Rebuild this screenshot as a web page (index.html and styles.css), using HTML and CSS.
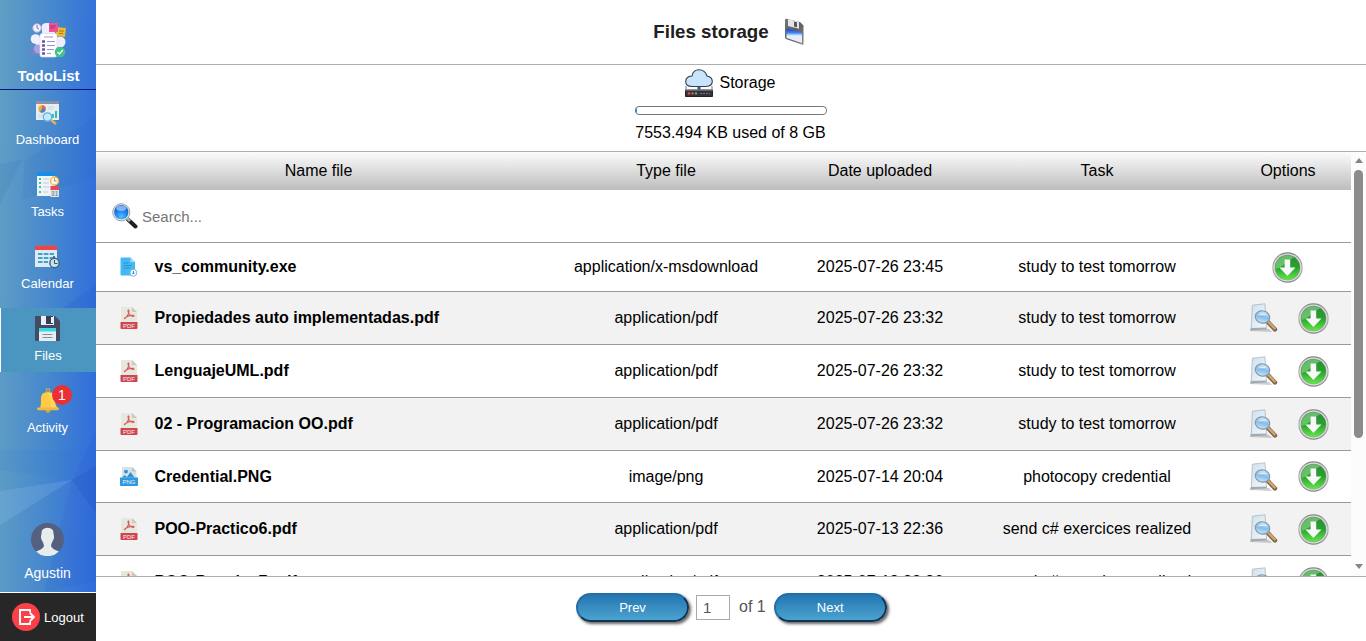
FILE: index.html
```html
<!DOCTYPE html>
<html lang="en">
<head>
<meta charset="utf-8">
<title>Files storage</title>
<link rel="stylesheet" href="styles.css">
</head>
<body>
<svg class="defs" aria-hidden="true">
  <defs>
    <linearGradient id="gGreen" x1="0" y1="0" x2="0" y2="1"><stop offset="0" stop-color="#2c8d3a"/><stop offset=".5" stop-color="#27a32c"/><stop offset="1" stop-color="#62e64a"/></linearGradient>
    <linearGradient id="gRing" x1="0" y1="0" x2="0" y2="1"><stop offset="0" stop-color="#858585"/><stop offset=".5" stop-color="#b4b4b4"/><stop offset="1" stop-color="#868686"/></linearGradient>
    <radialGradient id="gLens" cx=".5" cy=".8" r=".8"><stop offset="0" stop-color="#4cc2ff"/><stop offset=".55" stop-color="#1a7cea"/><stop offset="1" stop-color="#1450b8"/></radialGradient>
    <linearGradient id="gPaper" x1="0" y1="0" x2="1" y2="1"><stop offset="0" stop-color="#cfe0ec"/><stop offset="1" stop-color="#f5fafd"/></linearGradient>
    <linearGradient id="gGlass" x1="0" y1="0" x2="0" y2="1"><stop offset="0" stop-color="#cfe9fb"/><stop offset=".5" stop-color="#86bce8"/><stop offset="1" stop-color="#c4e6fa"/></linearGradient>
    <linearGradient id="gFloppy" x1="0" y1="0" x2="1" y2="1"><stop offset="0" stop-color="#77777d"/><stop offset=".5" stop-color="#5c5d64"/><stop offset="1" stop-color="#8b8b8e"/></linearGradient>
    <linearGradient id="gLabel" x1="0" y1="0" x2="0" y2="1"><stop offset="0" stop-color="#1538d8"/><stop offset=".3" stop-color="#3c86f6"/><stop offset=".5" stop-color="#e4edf9"/><stop offset="1" stop-color="#eceef2"/></linearGradient>
  </defs>
  <symbol id="i-down" viewBox="0 0 31 31">
    <circle cx="15.5" cy="15.5" r="15.2" fill="url(#gRing)"/>
    <circle cx="15.5" cy="15.5" r="14" fill="#dcdcdc"/>
    <circle cx="15.5" cy="15.5" r="12.8" fill="#8f9b8f"/>
    <circle cx="15.5" cy="15.5" r="12.3" fill="url(#gGreen)"/>
    <path d="M3.5 17A12 12 0 0 1 22 5.500C15 8 12 15 3.500 17z" fill="#8fd88f" opacity=".6"/>
    <path d="M12.6 7.5h5.6v8h5.3L15.4 24l-8-8.5h5.2z" fill="#f8f8f8"/>
  </symbol>
  <symbol id="i-view" viewBox="0 0 30 30">
    <path d="M.5 28 4 25l16 1 3 3z" fill="#888" opacity=".4"/>
    <path d="M3.4 2.2 16 .8l1.500 25-15.300 1z" fill="url(#gPaper)" stroke="#a9b8c3" stroke-width=".8"/>
    <path d="m2 25 15.500-.5v1.800L1 27.500z" fill="#a3abb1"/>
    <path d="m19 19 7 7.500" stroke="#806246" stroke-width="4.400" stroke-linecap="round"/>
    <path d="m19 18.500 6.700 7" stroke="#cfa773" stroke-width="2.400" stroke-linecap="round"/>
    <ellipse cx="13.500" cy="14" rx="7.300" ry="6.100" transform="rotate(12 13.500 14)" fill="url(#gGlass)" stroke="#8496a4" stroke-width="1.100"/>
    <path d="M8.500 12.500q5-4 9.800-.3-5-1-9.800.3z" fill="#fff" opacity=".75"/>
  </symbol>
  <symbol id="i-search" viewBox="0 0 26 26">
    <path d="m16 16.500 7.500 7" stroke="#222" stroke-width="4" stroke-linecap="round"/>
    <path d="m15 15 3 3" stroke="#aaa" stroke-width="3"/>
    <circle cx="9.300" cy="9.300" r="8.600" fill="#dfe4e8" stroke="#9aa5b0" stroke-width="1"/>
    <circle cx="9.300" cy="9.100" r="7.200" fill="url(#gLens)"/>
    <ellipse cx="9.300" cy="5.200" rx="5" ry="2.700" fill="#b8dcff" opacity=".65"/>
  </symbol>
  <symbol id="i-pdf" viewBox="0 0 18 22">
    <path d="M1 0h11l5 5v12H1z" fill="#e7e8dd"/><path d="M12 0v5h5z" fill="#c9cabf"/>
    <path d="M4.8 11.5C7 10 9.2 6.4 8.9 3.8c-.1-1.4-1.2-.9-.8.7.6 2.5 3 4.8 5.2 4.9.9 0 1-.9-.3-1-2.7-.2-5.5.7-7.7 2.2-1 .7-1.1 1.5-.5.9z" fill="none" stroke="#d65a5d" stroke-width="1.1"/>
    <path d="M.5 15h17v6a1 1 0 0 1-1 1h-15a1 1 0 0 1-1-1z" fill="#cf4550"/>
    <text x="9" y="20.7" text-anchor="middle" class="file-tag">PDF</text>
  </symbol>
  <symbol id="i-png" viewBox="0 0 18 19">
    <path d="M2 0h10l4.5 4.5V12H2z" fill="#d6e2e8"/><path d="M12 0v4.5h4.5z" fill="#b5c4cd"/>
    <circle cx="6" cy="4.6" r="1.9" fill="#2c91dc"/><path d="M2 10.5 4.5 8l2.5 2 3.5-5 4 5.5z" fill="#2f91da"/>
    <path d="M0 10.5h18V18a1 1 0 0 1-1 1H1a1 1 0 0 1-1-1z" fill="#2b9ae3"/>
    <text x="9" y="17.2" text-anchor="middle" class="file-tag">PNG</text>
  </symbol>
  <symbol id="i-exe" viewBox="0 0 18 20">
    <path d="M1.5 .5h9L15 5v13.500H1.500a1 1 0 0 1-1-1v-16a1 1 0 0 1 1-1z" fill="#44b8f3"/>
    <path d="M10.5 .5V5H15z" fill="#a7dcf8"/>
    <path d="M3.500 6h5M3.500 8.500h8M3.500 11h7" stroke="#2292d2" stroke-width="1"/>
    <circle cx="13.400" cy="15.800" r="3.400" fill="#fff" stroke="#6dbde6" stroke-width="1"/>
    <path d="M13.400 14v2.300M12.200 15.800l1.200 1.200 1.200-1.200" stroke="#2486bb" fill="none"/>
  </symbol>
</svg>

<div class="app">
  <aside class="sidebar">
    <svg class="facets" viewBox="0 0 96 592" preserveAspectRatio="none">
      <path d="M25 160 96 117v60L22 200z" fill="#1c5cb2" opacity=".08"/>
      <path d="M0 164 22 160 0 205z" fill="#1c5cb2" opacity=".1"/>
      <path d="M60 310 96 285v90z" fill="#1147c8" opacity=".12"/>
      <path d="M96 431v150L44 592 72 480z" fill="#1443c8" opacity=".08"/>
      <path d="M0 491 72 480 0 525z" fill="#a9d2ff" opacity=".16"/>
      <path d="M0 470 72 480 88 450H0z" fill="#2473ce" opacity=".1"/>
      <path d="m72 480 24-14v48z" fill="#1341b7" opacity=".16"/>
    </svg>
    <div class="brand">
      <svg width="36" height="37" viewBox="0 0 36 37">
        <circle cx="7" cy="7" r="4.200" fill="#f3f2ff" stroke="#b8aedf"/><path d="M7 4v3l2 1" stroke="#7770ab" fill="none"/>
        <path d="M12 9q-2-8 6-7h7v12H12z" fill="#f0ecff"/>
        <circle cx="5.500" cy="18" r="4.800" fill="#f4f0ff"/><path d="M5 22 12 16v11H8z" fill="#f4f0ff"/><circle cx="30" cy="21" r="5.500" fill="#f0eefc"/>
        <circle cx="8" cy="28" r="4.500" fill="#a9a0e0"/><circle cx="2.700" cy="32" r="2.700" fill="#7783c4"/>
        <path d="m26 6 10 1-1 9-9-1z" fill="#f0b532"/><path d="M29 10h5M29 12.500h4" stroke="#a77919"/>
        <path d="M19 2h9v9h-9z" fill="#ee5494"/><path d="M20 5h6M20 7h5" stroke="#b2306b"/>
        <rect x="10" y="12.500" width="17" height="23.500" rx="2" fill="#fff" stroke="#ded8f1" stroke-width=".7"/>
        <path d="M14 16h9M17 20.500h8M17 24.500h8M17 28.500h7M17 32.500h4" stroke="#9c95ce" stroke-width="1"/>
        <path d="M12 20.500h3M12 24.500h3M12 28.500h3M12 32.500h3" stroke="#6657af" stroke-width="2.300"/>
        <circle cx="30" cy="31" r="5.300" fill="#3fc48a"/><path d="m27.500 31 2 2 3.300-4" fill="none" stroke="#fff" stroke-width="1.200"/>
      </svg>
      <span>TodoList</span>
    </div>
    <nav class="nav">
      <a class="item">
        <svg width="25" height="25" viewBox="0 0 25 25"><path d="M1 1h23v19H1z" fill="#e8edf4"/><path d="M1 1h23v3H1z" fill="#8792a5"/><path d="M2 2.500h3" stroke="#ff6d56"/><circle cx="7" cy="9" r="3.700" fill="#f4ac38"/><path d="M7 9V5.300A3.700 3.700 0 0 1 10.700 9z" fill="#ed5d54"/><path d="M7 9h3.700A3.700 3.700 0 0 1 5 12z" fill="#308edb"/><path d="M13 7h7M13 9h5M3 15h5M3 17h4" stroke="#b7dfe9"/><path d="M17 18v-4h2v4zm3 0v-7h2v7z" fill="#30c0b3"/><path d="m16 20 5 4" stroke="#edab5b" stroke-width="2.500"/><circle cx="12.500" cy="17" r="4.200" fill="#bcecff" stroke="#6aabe0" stroke-width="1.300"/></svg>
        <span>Dashboard</span>
      </a>
      <a class="item">
        <svg width="25" height="25" viewBox="0 0 25 25"><path d="M2 1h18v23H2z" fill="#eff4f8"/><path d="M2 0h18v4H2z" fill="#168de9"/><path d="M4 7h2M4 11h2M4 15h2M4 20h2" stroke="#36c699" stroke-width="2"/><path d="M8 7h6M8 11h6M8 15h6M8 20h5" stroke="#c3ccd6"/><circle cx="19.500" cy="9" r="4" fill="#fff5df" stroke="#f2b94d" stroke-width="1.300"/><path d="M19.500 6.500V9h2" stroke="#b58c54" fill="none"/><path d="M15.500 15H24v10h-8.500z" fill="#e2e5e9"/><path d="M15.500 14H24v4h-8.500z" fill="#e54759"/><text x="19.700" y="24" text-anchor="middle" class="day">31</text></svg>
        <span>Tasks</span>
      </a>
      <a class="item">
        <svg width="25" height="25" viewBox="0 0 25 25"><path d="M0 4h22v19H0z" fill="#dfeaf4"/><path d="M0 2h22v4H0z" fill="#e84549"/><path d="M4 0v3M9 0v3M14 0v3M19 0v3" stroke="#d3566d" stroke-width="1.300"/><path d="M3 10h16M3 14h16M3 18h10" stroke="#3ca4c8" stroke-width="2" stroke-dasharray="4.500 1.300"/><path d="M19 12v3" stroke="#4d728e" stroke-width="2"/><circle cx="19.500" cy="19" r="4.700" fill="#c4e3f1" stroke="#42647e" stroke-width="1.500"/><path d="M19.500 16v3.500h3" stroke="#3b5268" fill="none"/></svg>
        <span>Calendar</span>
      </a>
      <a class="item active">
        <svg width="26" height="25" viewBox="0 0 26 25"><path d="M1 0h19l5 5v19q0 1-1 1H1q-1 0-1-1V1q0-1 1-1z" fill="#414b63"/><path d="M6 0h13v9H6z" fill="#e9eff3"/><path d="M11 0h7v8h-7z" fill="#343f55"/><path d="M16 1h2v6h-2z" fill="#e9eff3"/><path d="M4 12h17v13H4z" fill="#e7edf1"/><path d="M4 12h17v3.500H4z" fill="#39d8e3"/><path d="M7.500 18.500h10M7.500 21.500h10" stroke="#7f909e"/></svg>
        <span>Files</span>
      </a>
      <a class="item">
        <svg width="22" height="25" viewBox="0 0 22 25"><circle cx="11" cy="2.500" r="1.700" fill="none" stroke="#c4a35b" stroke-width="1.500"/><circle cx="11" cy="22.500" r="2.400" fill="#d3a347"/><path d="M3 20q1-2 1-10Q4 4 11 4q7 0 7 6 0 8 3 10z" fill="#ffcb45"/><path d="M11 5q6 0 6 5 0 8 2 10h-5q1-9-3-15z" fill="#ffe37a" opacity=".6"/><rect y="19.500" width="22" height="2.800" rx="1.400" fill="#f2b840"/></svg>
        <b class="badge">1</b>
        <span>Activity</span>
      </a>
    </nav>
    <div class="user">
      <svg width="33" height="33" viewBox="0 0 33 33"><circle cx="16.500" cy="16.500" r="16.500" fill="#556080"/><path d="M5 28.500q7-2.500 8-5.500-.2-2-1.500-4.500Q9 15 10.500 11 10 5 16.500 4.800 23 5 22.500 11q1.500 4-1 7.500Q20 21 20 23q1 3 8 5.500a16.500 16.500 0 0 1-23 0z" fill="#e7eced"/></svg>
      <span>Agustin</span>
    </div>
    <a class="logout">
      <svg width="28" height="28" viewBox="0 0 28 28"><circle cx="14" cy="14" r="14" fill="#fb4148"/><path d="M18 9.500V7H8v14h10v-2.500M12 14h10m-4-4 4 4-4 4" fill="none" stroke="#fff" stroke-width="1.900"/></svg>
      <span>Logout</span>
    </a>
  </aside>

  <main class="main">
    <header class="title">
      <h1>Files storage</h1>
      <svg width="21" height="28" viewBox="0 0 21 28"><path d="M1 2q0-1.500 1-1.300L16 4l3.500 3.500V26q0 1-1 .8L2 21Q1 20.500 1 19z" fill="url(#gFloppy)"/><path d="m4 1.200 11 2.600v7L4 8z" fill="#e3e4e6"/><path d="m10 3.500 3 .8v5l-3-.8z" fill="#57585e"/><path d="m2.500 10.500 15.500 4v10.500L2.500 20z" fill="url(#gLabel)"/></svg>
    </header>
    <section class="storage">
      <div class="storage-label">
        <svg width="28" height="28" viewBox="0 0 28 28"><path d="M1 17v5M27 17v5" stroke="#777"/><path d="M7 17.500Q.7 17.500.7 12.500T7 7Q8 .7 14 .7T22 7q5.300 1 5.300 5.500T21 17.500z" fill="#c9e4fa" stroke="#333e4b" stroke-width="1.100"/><path d="M12.500 17.500h3v4h-3z" fill="#315b85"/><path d="M.5 21h27v6.500H.5z" fill="#35333b" stroke="#222"/><path d="M0 21h28" stroke="#9a9aa0"/><circle cx="4" cy="24.400" r="1.200" fill="#e35c51"/><circle cx="7.500" cy="24.400" r="1.200" fill="#e35c51"/><circle cx="11" cy="24.400" r="1.200" fill="#59b66c"/><path d="M15 24.500h10" stroke="#777" stroke-dasharray="2 1"/></svg>
        <span>Storage</span>
      </div>
      <div class="meter"><div class="meter-fill"></div></div>
      <p>7553.494 KB used of 8 GB</p>
    </section>

    <section class="list">
      <div class="table">
        <div class="row head"><span>Name file</span><span>Type file</span><span>Date uploaded</span><span>Task</span><span>Options</span></div>
        <div class="search"><svg width="26" height="26"><use href="#i-search"/></svg><input type="text" placeholder="Search..."></div>
        <div class="row short"><span class="name"><svg width="18" height="20"><use href="#i-exe"/></svg><b>vs_community.exe</b></span><span>application/x-msdownload</span><span>2025-07-26 23:45</span><span>study to test tomorrow</span><span class="options single"><svg width="31" height="31"><use href="#i-down"/></svg></span></div>
        <div class="row alt"><span class="name"><svg width="18" height="22"><use href="#i-pdf"/></svg><b>Propiedades auto implementadas.pdf</b></span><span>application/pdf</span><span>2025-07-26 23:32</span><span>study to test tomorrow</span><span class="options"><svg width="30" height="30"><use href="#i-view"/></svg><svg width="31" height="31"><use href="#i-down"/></svg></span></div>
        <div class="row"><span class="name"><svg width="18" height="22"><use href="#i-pdf"/></svg><b>LenguajeUML.pdf</b></span><span>application/pdf</span><span>2025-07-26 23:32</span><span>study to test tomorrow</span><span class="options"><svg width="30" height="30"><use href="#i-view"/></svg><svg width="31" height="31"><use href="#i-down"/></svg></span></div>
        <div class="row alt"><span class="name"><svg width="18" height="22"><use href="#i-pdf"/></svg><b>02 - Programacion OO.pdf</b></span><span>application/pdf</span><span>2025-07-26 23:32</span><span>study to test tomorrow</span><span class="options"><svg width="30" height="30"><use href="#i-view"/></svg><svg width="31" height="31"><use href="#i-down"/></svg></span></div>
        <div class="row image"><span class="name"><svg width="18" height="19"><use href="#i-png"/></svg><b>Credential.PNG</b></span><span>image/png</span><span>2025-07-14 20:04</span><span>photocopy credential</span><span class="options"><svg width="30" height="30"><use href="#i-view"/></svg><svg width="31" height="31"><use href="#i-down"/></svg></span></div>
        <div class="row alt"><span class="name"><svg width="18" height="22"><use href="#i-pdf"/></svg><b>POO-Practico6.pdf</b></span><span>application/pdf</span><span>2025-07-13 22:36</span><span>send c# exercices realized</span><span class="options"><svg width="30" height="30"><use href="#i-view"/></svg><svg width="31" height="31"><use href="#i-down"/></svg></span></div>
        <div class="row"><span class="name"><svg width="18" height="22"><use href="#i-pdf"/></svg><b>POO-Practico7.pdf</b></span><span>application/pdf</span><span>2025-07-13 22:36</span><span>send c# exercices realized</span><span class="options"><svg width="30" height="30"><use href="#i-view"/></svg><svg width="31" height="31"><use href="#i-down"/></svg></span></div>
      </div>
      <div class="scrollbar"><i class="up"></i><i class="thumb"></i><i class="down"></i></div>
    </section>

    <footer class="pager">
      <button>Prev</button><input class="page" type="text" value="1"><span>of 1</span><button>Next</button>
    </footer>
  </main>
</div>
</body>
</html>
```
FILE: styles.css
```css
* { box-sizing: border-box; }
body { margin: 0; overflow: hidden; background: #fff; color: #000; font: 16px/18px "Liberation Sans", Arial, sans-serif; }
svg { display: block; flex: none; }
.defs { position: absolute; width: 0; height: 0; }
.file-tag { font: 6px "Liberation Sans", sans-serif; fill: #fbeeee; }
.day { font: bold 6.5px "Liberation Sans", sans-serif; fill: #8d959f; }

.app { display: flex; height: 641px; }
.sidebar { position: relative; display: flex; flex-direction: column; width: 96px; flex: none; color: #fff; font-size: 13px; line-height: 16px; background: linear-gradient(91deg, #609fc4 0%, #4485cf 55%, #306bdd 100%); }
.facets { position: absolute; left: 0; top: 0; width: 96px; height: 592px; }
.brand { position: relative; display: flex; flex-direction: column; align-items: center; height: 90px; padding-top: 21px; border-bottom: 1px solid #04118c; font-weight: bold; font-size: 15px; }
.brand span { margin-top: 10px; padding-left: 1px; }
.nav { position: relative; display: flex; flex-direction: column; gap: 8px; padding-top: 2px; }
.item { position: relative; display: flex; flex-direction: column; align-items: center; gap: 7px; height: 64px; padding-top: 8px; padding-right: 1px; }
.item.active { background: #4a96c0; border-left: 1px solid #fff; }
.badge { position: absolute; left: 52px; top: 5px; width: 20px; height: 20px; border-radius: 50%; background: #ea3034; font-weight: normal; font-size: 14px; line-height: 20px; text-align: center; }
.user { position: relative; display: flex; flex-direction: column; align-items: center; gap: 9px; margin-top: auto; padding: 0 1px 11px 0; font-size: 14px; }
.logout { position: relative; display: flex; align-items: center; gap: 4px; height: 49px; padding-left: 12px; border-top: 1px solid #fff; background: #272727; }
.logout span { padding-top: 2px; }

.main { flex: 1; display: flex; flex-direction: column; min-width: 0; }
.title { display: flex; align-items: center; justify-content: center; gap: 15px; height: 65px; padding-right: 4px; border-bottom: 1px solid #adadad; }
h1 { margin: 0; font-size: 18.72px; line-height: 22px; padding-bottom: 1px; color: #202020; }
.storage { display: flex; flex-direction: column; align-items: center; height: 87px; padding-top: 4px; border-bottom: 1px solid #adadad; }
.storage-label { display: flex; gap: 6px; height: 28px; line-height: 27px; padding-right: 1px; }
.meter { width: 192px; height: 9px; margin-top: 9px; border: 1px solid #777; border-left-color: #2a76b0; border-radius: 5px; overflow: hidden; }
.meter-fill { width: 1px; height: 7px; background: #2482c7; }
.storage p { margin: 9px 0 0; padding-right: 1px; }

.list { display: flex; height: 425px; overflow: hidden; border-bottom: 1px solid #adadad; }
.table { flex: 1; }
.row { display: grid; grid-template-columns: 445px 250px 178px 256px 126px; align-items: center; height: 53px; border-bottom: 1px solid #999; text-align: center; }
.row.head { height: 38px; border: 0; background: linear-gradient(#fcfcfc, #bdbdbd); }
.row.short { height: 49px; }
.row.image { height: 52px; }
.row.alt { background: #f2f2f2; }
.name { display: flex; align-items: center; gap: 16.5px; padding-left: 24px; }
.options { display: flex; align-items: center; justify-content: center; gap: 19px; padding-left: 1px; }
.options.single { padding: 0 2px 0 0; }
.search { display: flex; align-items: center; gap: 4px; height: 53px; padding-left: 16px; border-bottom: 1px solid #999; }
.search input { border: 0; padding: 0; width: 300px; outline: 0; font: 15px "Liberation Sans", sans-serif; background: transparent; }
.search input::placeholder { color: #757575; }
.scrollbar { display: flex; flex-direction: column; align-items: center; width: 15px; height: 424px; padding: 6px 0 7px; background: #fcfcfc; }
.thumb { width: 9px; height: 268px; margin-top: 7px; border-radius: 5px; background: #8b8b8b; }
.up, .down { border-left: 4.5px solid transparent; border-right: 4.5px solid transparent; }
.up { border-bottom: 5px solid #858585; }
.down { margin-top: auto; border-top: 5px solid #858585; }

.pager { display: flex; align-items: center; height: 64px; padding-left: 480px; color: #555; }
.pager button { width: 113px; height: 29px; border: 2px outset #246da6; border-radius: 15px; background: linear-gradient(#2476b2, #4ba3cf); box-shadow: 2px 2px 3px #666; color: #fff; font: 13px "Liberation Sans", sans-serif; margin-bottom: 4px; }
.page { width: 34px; height: 25px; margin: 0 9px 3px 7px; padding: 0 6px; border: 1px solid #aaa; font: 15px "Liberation Sans", sans-serif; color: #555; }
.pager span { margin: 0 8px 5px 0; }
```
